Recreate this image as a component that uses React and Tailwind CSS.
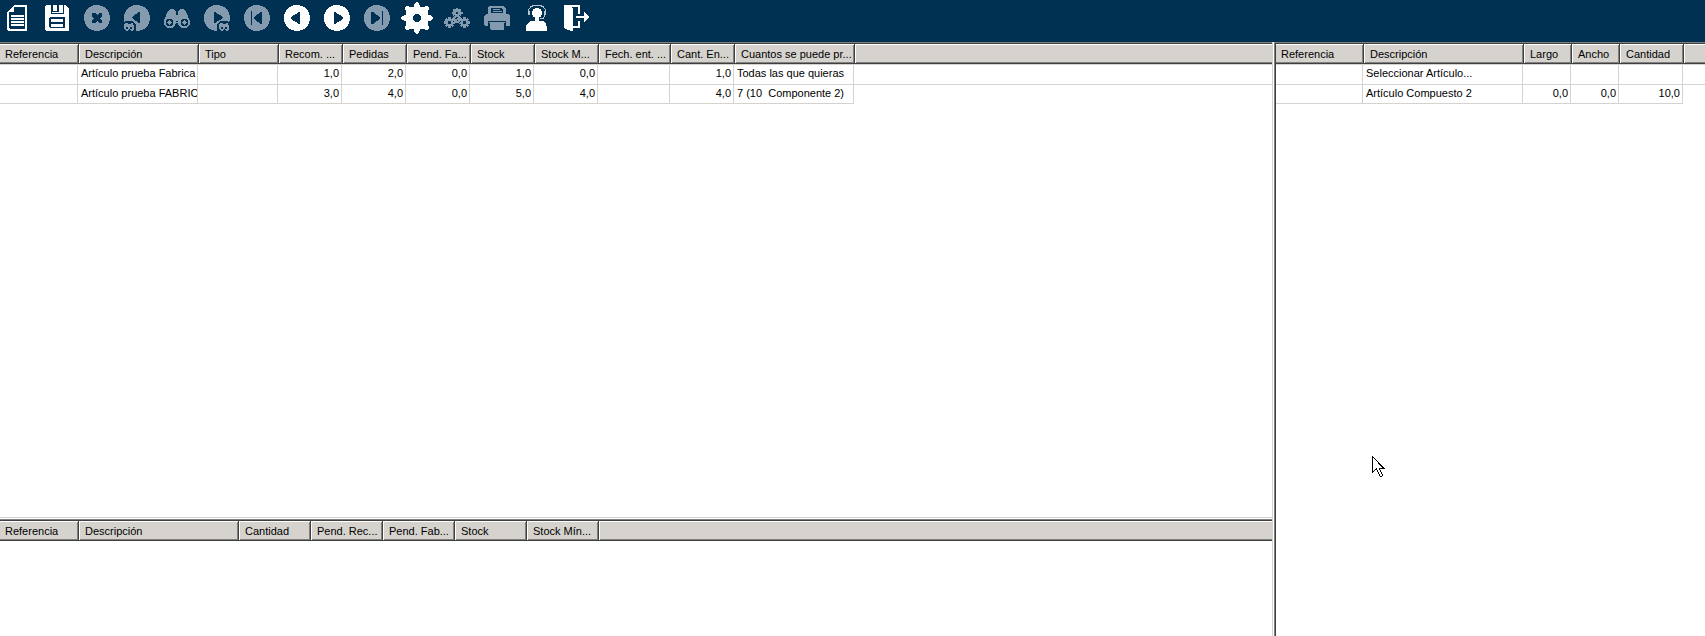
import React from 'react';
import clsx from 'clsx';

const TOOTH_ANGLES = [0, 45, 90, 135, 180, 225, 270, 315];

const Icon = ({ children }) => (
  <svg viewBox="0 0 32 32" className="block h-8 w-8" fill="currentColor" shapeRendering="crispEdges" aria-hidden="true">
    {children}
  </svg>
);

const NewIcon = () => (
  <Icon>
    <path fillRule="evenodd" d="M13 3h12l1 1v24l-1 1H7l-1-1V10zM13 5v4l-1 1H8v16l1 1h14l1-1V6l-1-1z" />
    <path d="M10 13h13v2H10zM10 16h13v2H10zM10 19h13v2H10zM10 22h13v2H10z" />
  </Icon>
);

const SaveIcon = () => (
  <Icon>
    <path
      fillRule="evenodd"
      d="M5 3h5v9h13V3h1l4 4v21l-1 1H5l-1-1V4zM9 15l-1 1v9l1 1h14l1-1v-9l-1-1zM10 17h12v3H10zM10 22h12v3H10z"
    />
    <path d="M12 3h4v6h-4zM18 3h4v8H11v-1h7z" />
  </Icon>
);

const CancelIcon = () => (
  <Icon>
    <circle cx="16" cy="16" r="13" />
    <path d="M11 11h4l1 2h1l1-2h3v4l-2 1v1l2 1v3h-3l-1-2h-1l-1 2h-4v-3l2-1v-1l-2-1z" fill="#003052" />
  </Icon>
);

const SmallBinoculars = ({ x }) => (
  <g transform={`translate(${x} 20)`}>
    <path d="M-1 3l3-4h8l3 4v7H-1z" fill="#003052" />
    <path d="M2 1h2l1 1h2l1-1h2l1 3v3L9 9H8L6 7 4 9H3L1 7V4z" />
    <path d="M3 5h2v2H3zM7 5h2v2H7z" fill="#003052" />
  </g>
);

const SearchPreviousIcon = () => (
  <Icon>
    <circle cx="16" cy="16" r="13" />
    <path d="M19 10v11h-1l-7-5v-1l7-5z" fill="#003052" />
    <SmallBinoculars x={2} />
  </Icon>
);

const SearchNextIcon = () => (
  <Icon>
    <circle cx="16" cy="16" r="13" />
    <path d="M13 10v11h1l8-5v-1l-8-5z" fill="#003052" />
    <SmallBinoculars x={17} />
  </Icon>
);

const SearchIcon = () => (
  <Icon>
    <path d="M9 7h4l2 3v3h2v-3l2-3h4l2 3 4 9v3l-2 3-2 1h-4l-3-2-1-3h-2l-1 3-3 2H7l-3-2-1-3v-3l4-9z" />
    <circle cx="8.500" cy="20.500" r="3" fill="none" stroke="#003052" strokeWidth="1.500" />
    <circle cx="23.500" cy="20.500" r="3" fill="none" stroke="#003052" strokeWidth="1.500" />
    <path d="M15 19h2v1h-2z" fill="#003052" />
  </Icon>
);

const FirstIcon = () => (
  <Icon>
    <circle cx="16" cy="16" r="13" />
    <path d="M10 9h1v14h-1zM21 10v12h-1l-7-5v-2l7-5z" fill="#003052" />
  </Icon>
);

const PreviousIcon = () => (
  <Icon>
    <circle cx="16" cy="16" r="13" />
    <path d="M19 10v12h-1l-8-5v-2l8-5z" fill="#003052" />
  </Icon>
);

const NextIcon = () => (
  <Icon>
    <circle cx="16" cy="16" r="13" />
    <path d="M13 10v12h1l8-5v-2l-8-5z" fill="#003052" />
  </Icon>
);

const LastIcon = () => (
  <Icon>
    <circle cx="16" cy="16" r="13" />
    <path d="M21 9h1v14h-1zM10 10v12h2l7-5v-2l-7-5z" fill="#003052" />
  </Icon>
);

const SettingsIcon = () => (
  <Icon>
    <circle cx="16" cy="16" r="8" fill="none" stroke="currentColor" strokeWidth="8" />
    {TOOTH_ANGLES.map((angle) => (
      <path key={angle} d="M12 7l2-6 1-.6h2l1 .6 2 6z" transform={`rotate(${angle} 16 16)`} />
    ))}
  </Icon>
);

const SmallGear = ({ x, y }) => (
  <g transform={`translate(${x} ${y})`}>
    <circle r="3" fill="none" stroke="currentColor" strokeWidth="3" />
    {TOOTH_ANGLES.map((angle) => (
      <path key={angle} d="M-1.200-5.500h2.400v2h-2.400z" transform={`rotate(${angle})`} />
    ))}
  </g>
);

const ProcessIcon = () => (
  <Icon>
    <SmallGear x={16} y={11} />
    <SmallGear x={8.5} y={20.5} />
    <SmallGear x={23.5} y={20.5} />
    <circle cx="16" cy="17" r="4.500" fill="#003052" />
    <circle cx="16" cy="17" r="3" fill="none" stroke="currentColor" strokeWidth="2" />
    <path d="M13 20l6-5" stroke="currentColor" strokeWidth="2" />
  </Icon>
);

const PrintIcon = () => (
  <Icon>
    <path fillRule="evenodd" d="M8 4h14l3 3v6H7V5zM10 6v5h12V8l-2-2z" />
    <path d="M12 7h7v1h-7zM12 9h9v1h-9z" />
    <path d="M5 12h22l2 2v9l-1 1h-3v-3H7v3H4l-1-1v-9z" />
    <path d="M9 21h14v6l-1 1H10l-1-1z" />
    <path d="M7 19h18v1H7zM7 20h1v4H7zM24 20h1v4h-1z" fill="#003052" />
  </Icon>
);

const SupportIcon = () => (
  <Icon>
    <circle cx="16" cy="11" r="5" />
    <path d="M7.500 12V8l2-3 4-2h5l4 2 2 3v4l-2 4-3 1" fill="none" stroke="#b8c6d4" strokeWidth="1" />
    <path d="M7 9h2v4H7zM23 9h2v4h-2z" fill="#b8c6d4" />
    <path d="M14 15h4v4h4l3 3 1 3v4H5v-4l1-3 3-3h5z" />
  </Icon>
);

const ExitIcon = () => (
  <Icon>
    <path d="M3 3h2l7 3v23h-2l-7-3z" />
    <path d="M5 3h14v9h-2V5H8zM17 19h2v7h-8v-2h6z" />
    <path d="M15 14h8v-4l6 5-6 5v-4h-8z" />
  </Icon>
);

const toolbarButtons = [
  { label: 'Nuevo', icon: NewIcon },
  { label: 'Guardar', icon: SaveIcon },
  { label: 'Cancelar', icon: CancelIcon, disabled: true },
  { label: 'Buscar anterior', icon: SearchPreviousIcon, disabled: true },
  { label: 'Buscar', icon: SearchIcon, disabled: true },
  { label: 'Buscar siguiente', icon: SearchNextIcon, disabled: true },
  { label: 'Primero', icon: FirstIcon, disabled: true },
  { label: 'Anterior', icon: PreviousIcon },
  { label: 'Siguiente', icon: NextIcon },
  { label: 'Último', icon: LastIcon, disabled: true },
  { label: 'Configuración', icon: SettingsIcon },
  { label: 'Procesos', icon: ProcessIcon, disabled: true },
  { label: 'Imprimir', icon: PrintIcon, disabled: true },
  { label: 'Soporte', icon: SupportIcon },
  { label: 'Salir', icon: ExitIcon },
];

const articleColumns = [
  { title: 'Referencia', width: 'w-[78px]' },
  { title: 'Descripción', width: 'w-[120px]' },
  { title: 'Tipo', width: 'w-[80px]' },
  { title: 'Recom. ...', width: 'w-[64px]', numeric: true },
  { title: 'Pedidas', width: 'w-[64px]', numeric: true },
  { title: 'Pend. Fa...', width: 'w-[64px]', numeric: true },
  { title: 'Stock', width: 'w-[64px]', numeric: true },
  { title: 'Stock M...', width: 'w-[64px]', numeric: true },
  { title: 'Fech. ent. ...', width: 'w-[72px]' },
  { title: 'Cant. En...', width: 'w-[64px]', numeric: true },
  { title: 'Cuantos se puede pr...', width: 'w-[120px]' },
];

const articleRows = [
  ['', 'Artículo prueba Fabrica', '', '1,0', '2,0', '0,0', '1,0', '0,0', '', '1,0', 'Todas las que quieras'],
  ['', 'Artículo prueba FABRIC', '', '3,0', '4,0', '0,0', '5,0', '4,0', '', '4,0', '7 (10  Componente 2)'],
];

const componentColumns = [
  { title: 'Referencia', width: 'w-[87px]' },
  { title: 'Descripción', width: 'w-[160px]' },
  { title: 'Largo', width: 'w-[48px]', numeric: true },
  { title: 'Ancho', width: 'w-[48px]', numeric: true },
  { title: 'Cantidad', width: 'w-[64px]', numeric: true },
];

const componentRows = [
  ['', 'Seleccionar Artículo...', '', '', ''],
  ['', 'Artículo Compuesto 2', '0,0', '0,0', '10,0'],
];

const pendingColumns = [
  { title: 'Referencia', width: 'w-[78px]' },
  { title: 'Descripción', width: 'w-[160px]' },
  { title: 'Cantidad', width: 'w-[72px]', numeric: true },
  { title: 'Pend. Rec...', width: 'w-[72px]', numeric: true },
  { title: 'Pend. Fab...', width: 'w-[72px]', numeric: true },
  { title: 'Stock', width: 'w-[72px]', numeric: true },
  { title: 'Stock Mín...', width: 'w-[72px]', numeric: true },
];

const headerCell =
  'h-5 overflow-hidden border-b border-[#404040] bg-[#d6d3ce] p-0 text-left font-normal leading-4 whitespace-nowrap';

const Grid = ({ label, columns, rows = [] }) => (
  <table aria-label={label} className="w-full table-fixed border-separate border-spacing-0">
    <thead>
      <tr>
        {columns.map((column, index) => (
          <th
            key={column.title}
            scope="col"
            className={clsx(
              headerCell,
              column.width,
              index === 0
                ? 'pl-[5px] shadow-[inset_0_1px_0_#fff,inset_-1px_-1px_0_#808080]'
                : 'border-l pl-1.5 shadow-[inset_1px_1px_0_#fff,inset_-1px_-1px_0_#808080]'
            )}
          >
            {column.title}
          </th>
        ))}
        <td className={clsx(headerCell, 'border-l shadow-[inset_1px_1px_0_#fff,inset_0_-1px_0_#808080]')} />
      </tr>
    </thead>
    <tbody>
      {rows.map((row, rowIndex) => (
        <tr key={rowIndex} className="align-top">
          {row.map((value, index) => (
            <td
              key={columns[index].title}
              className={clsx(
                'overflow-hidden border-r border-b border-[#d6d3ce] py-0 leading-4 whitespace-pre',
                rowIndex === 0 ? 'h-[21px] border-t' : 'h-[19px]',
                columns[index].numeric ? 'pr-0.5 text-right' : 'pr-0 pl-[3px]'
              )}
            >
              {value}
            </td>
          ))}
          <td className={clsx('border-[#d6d3ce] p-0', rowIndex === 0 && 'border-t border-b')} />
        </tr>
      ))}
    </tbody>
  </table>
);

const Toolbar = () => (
  <header className="h-[42px] shrink-0 bg-[#003052] pt-0.5 pl-px">
    <div className="flex gap-2">
      {toolbarButtons.map(({ label, icon: ButtonIcon, disabled }) => (
        <button
          key={label}
          type="button"
          aria-label={label}
          disabled={disabled}
          className={clsx('h-8 w-8', disabled ? 'text-[#849aae]' : 'text-white')}
        >
          <ButtonIcon />
        </button>
      ))}
    </div>
  </header>
);

const App = () => {
  return (
    <div className="flex h-screen flex-col overflow-hidden bg-white font-['Liberation_Sans',Arial,sans-serif] text-[11px] text-black">
      <Toolbar />

      <main className="flex min-h-0 flex-1 gap-px">
        <div className="flex min-w-0 flex-1 flex-col gap-px border-r border-[#d6d3ce]">
          <section className="min-h-0 flex-1 border-t border-b border-t-[#808080] border-b-[#d6d3ce]">
            <div className="border-t border-[#404040]">
              <Grid label="Artículos" columns={articleColumns} rows={articleRows} />
            </div>
          </section>
          <section className="h-[117px] shrink-0 border-t border-[#808080]">
            <div className="border-t border-[#404040]">
              <Grid label="Pendientes" columns={pendingColumns} />
            </div>
          </section>
        </div>

        <aside className="w-[431px] shrink-0 border-t border-l border-[#808080]">
          <div className="relative h-full border-t border-l border-[#404040]">
            <Grid label="Componentes" columns={componentColumns} rows={componentRows} />
            {/* mouse pointer */}
            <svg
              viewBox="0 0 13 22"
              className="pointer-events-none absolute top-[412px] left-24 h-[22px] w-[13px]"
              shapeRendering="crispEdges"
              aria-hidden="true"
            >
              <path
                d="M.500.500v16l4-4 3 7 1 1h1l1-1-3-7h4.500z"
                fill="#fff"
                stroke="#000"
                strokeWidth="1"
              />
            </svg>
          </div>
        </aside>
      </main>
    </div>
  );
};

export default App;
